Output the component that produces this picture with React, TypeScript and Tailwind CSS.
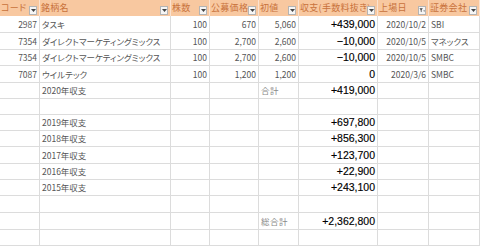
import React from "react";

type Align = "l" | "r";
type Kind = "gray" | "money" | "label";

interface Cell {
  text?: string;
  align?: Align;
  kind?: Kind;
}

const headers = ["コード", "銘柄名", "株数", "公募価格", "初値", "収支(手数料抜き)", "上場日", "証券会社"];

// row heights measured off the sheet
const heights = ["h-[17px]", "h-[17px]", "h-[16px]", "h-[17px]", "h-[16px]", "h-[16px]", "h-[16px]", "h-[16px]", "h-[17px]", "h-[16px]", "h-[16px]", "h-[17px]", "h-[17px]", "h-[16px]"];

const stock = (code: string, name: string, qty: string, ipo: string, first: string, pl: string, date: string, broker: string): Cell[] => [
  { text: code, align: "r" },
  { text: name, align: "l" },
  { text: qty, align: "r" },
  { text: ipo, align: "r" },
  { text: first, align: "r" },
  { text: pl, align: "r", kind: "money" },
  { text: date, align: "r" },
  { text: broker, align: "l" },
];

const yearRow = (label: string, amount: string, total?: string): Cell[] => [
  {},
  { text: label, align: "l" },
  {},
  {},
  { text: total, align: "l", kind: "label" },
  { text: amount, align: "r", kind: "money" },
  {},
  {},
];

const empty: Cell[] = [{}, {}, {}, {}, {}, {}, {}, {}];

const rows: Cell[][] = [
  stock("2987", "タスキ", "100", "670", "5,060", "+439,000", "2020/10/2", "SBI"),
  stock("7354", "ダイレクトマーケティングミックス", "100", "2,700", "2,600", "−10,000", "2020/10/5", "マネックス"),
  stock("7354", "ダイレクトマーケティングミックス", "100", "2,700", "2,600", "−10,000", "2020/10/5", "SMBC"),
  stock("7087", "ウイルテック", "100", "1,200", "1,200", "0", "2020/3/6", "SMBC"),
  yearRow("2020年収支", "+419,000", "合計"),
  empty,
  yearRow("2019年収支", "+697,800"),
  yearRow("2018年収支", "+856,300"),
  yearRow("2017年収支", "+123,700"),
  yearRow("2016年収支", "+22,900"),
  yearRow("2015年収支", "+243,100"),
  empty,
  yearRow("", "+2,362,800", "総合計"),
  empty,
];

function DropButton({ filtered }: { filtered?: boolean }) {
  return (
    <span className="absolute right-[2px] top-[6px] flex h-[9px] w-[8px] items-center justify-center border border-[#b4b4b4] bg-[#f6f6f6]">
      {filtered ? (
        <svg width="7" height="7" viewBox="0 0 7 7">
          <path d="M0.5 1h4l-1.5 2v2.5l-1 -0.7v-1.8z" fill="#444" />
          <path d="M5 3.5h2l-1 1.5z" fill="#444" />
        </svg>
      ) : (
        <svg width="5" height="3" viewBox="0 0 5 3">
          <path d="M0 0h5l-2.5 3z" fill="#444" />
        </svg>
      )}
    </span>
  );
}

export default function App() {
  return (
    <div className="h-[246px] w-[480px] overflow-hidden bg-white font-['Noto_Sans_CJK_JP',sans-serif] [font-feature-settings:'palt']">
      <div className="grid grid-cols-[40px_131px_39px_49px_40px_79px_51px_51px]">
        {headers.map((h, i) => (
          <div
            key={h}
            className="relative h-[16px] overflow-hidden whitespace-nowrap border-r border-[#fbe2cf] bg-[#f8c8a0] pl-[1px] text-[9px] leading-[16px] tracking-[0.3px] text-[#c8723c]"
          >
            {h}
            <DropButton filtered={i === 6} />
          </div>
        ))}

        {rows.map((row, r) =>
          row.map((c, i) => (
            <div
              key={`${r}-${i}`}
              className={`${heights[r]} flex items-end overflow-hidden whitespace-nowrap border-b border-r border-[#dcdcdc] px-[2px] pb-[1px] ${
                c.align === "r" ? "justify-end" : "justify-start"
              } ${
                c.kind === "money"
                  ? "font-['Liberation_Sans',sans-serif] text-[10.5px] leading-[13px] text-black [-webkit-text-stroke:0.15px_#000]"
                  : c.kind === "label"
                  ? "text-[8.5px] leading-[13px] tracking-[0.5px] text-[#8a8a8a]"
                  : "text-[8.5px] leading-[13px] text-[#555]"
              }`}
            >
              {c.text}
            </div>
          ))
        )}
      </div>
    </div>
  );
}
